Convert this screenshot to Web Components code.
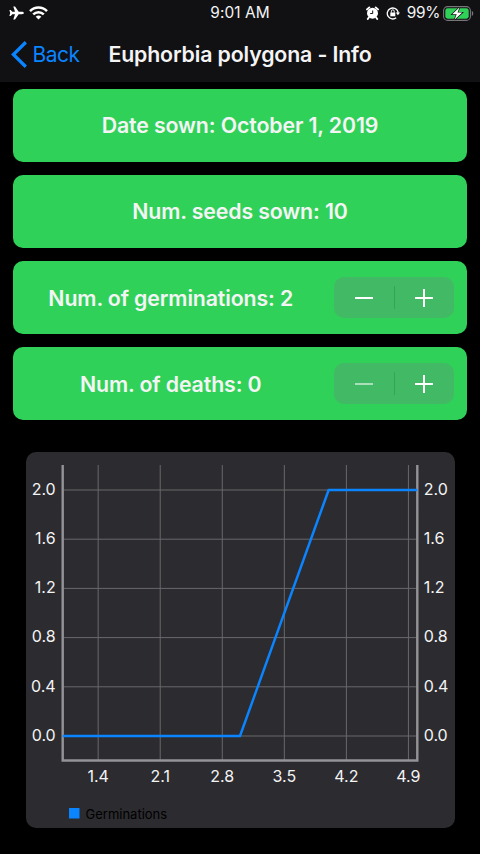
<!DOCTYPE html>
<html lang="en">
<head>
<meta charset="utf-8">
<title>Euphorbia polygona - Info</title>
<style>
html,body{margin:0;background:#000}
body{width:480px;height:854px;overflow:hidden;font-family:Inter,"Liberation Sans",sans-serif;color:#f4f4f5}
</style>
</head>
<body>
<seed-screen>
  <status-bar slot="top" time="9:01 AM" charge="99%"></status-bar>
  <nav-bar slot="top" back="Back">Euphorbia polygona - Info</nav-bar>
  <info-card>Date sown: October 1, 2019</info-card>
  <info-card>Num. seeds sown: 10</info-card>
  <info-card>Num. of germinations: 2<step-control slot="control"></step-control></info-card>
  <info-card>Num. of deaths: 0<step-control slot="control" at-min></step-control></info-card>
  <line-chart slot="chart" label="Germinations"></line-chart>
</seed-screen>
<script>
const define = (name, html, setup) => customElements.define(name, class extends HTMLElement {
  constructor() {
    super();
    const t = document.createElement('template');
    t.innerHTML = html;
    this.attachShadow({mode: 'open'}).append(t.content.cloneNode(true));
  }
  connectedCallback() { if (setup) setup(this, this.shadowRoot); }
});

define('seed-screen', `
<style>
:host{display:flex;flex-direction:column;height:854px;background:#000}
header{height:82px;background:#111113;flex:none}
main{display:grid;grid-template-rows:repeat(4,73.3px);row-gap:12.9px;padding:6.5px 13px 0}
footer{padding:32.1px 25.5px 0}
</style>
<header><slot name="top"></slot></header>
<main><slot></slot></main>
<footer><slot name="chart"></slot></footer>`);

define('status-bar', `
<style>
:host{display:grid;grid-template-columns:1fr auto 1fr;align-items:center;height:26px;font-size:15.4px;line-height:26px;letter-spacing:.1px}
.l,.r{display:flex;align-items:center}
.l{padding-left:9px;gap:5px}
.r{justify-content:flex-end;padding-right:6px}
svg{display:block;flex:none}
.r svg:nth-child(2){margin:0 7px 0 7px}
#charge{margin-right:3px;letter-spacing:-.3px}
</style>
<div class="l">
<svg width="15" height="14" viewBox="0 0 15 14" fill="#fff"><path d="M14.8 7c0 .8-.8 1.200-1.8 1.200H9.700l-3.700 5.200H4.300L6 8.200H3.300L1.700 10H.4L1.200 7 .4 4h1.300L3.300 5.800H6L4.300.6H6l3.700 5.200H13c1 0 1.800.4 1.800 1.200z"/></svg>
<svg width="19" height="14" viewBox="0 0 19 14" fill="none" stroke="#fff" stroke-width="2.5"><path d="M1 5.200C5.800.4 13.200.4 18 5.200"/><path d="M4.200 8.400c3-2.900 7.600-2.900 10.600 0"/><path d="M6.700 10.700c1.600-1.500 4-1.500 5.600 0L9.500 13.600z" fill="#fff" stroke="none"/></svg>
</div>
<span id="time"></span>
<div class="r">
<svg width="13" height="14" viewBox="0 0 13 14"><circle cx="6.500" cy="7.200" r="5.500" fill="#fff"/><path d="M1 3.400 3.300 1.400M12 3.400 9.700 1.400M2.800 11.500 1.800 13M10.200 11.500l1 1.500" stroke="#fff" stroke-width="1.900" stroke-linecap="round"/><path d="M6.700 4.500v3H4.200" fill="none" stroke="#111113" stroke-width="1"/></svg>
<svg width="14" height="14" viewBox="0 0 14 14" fill="none" stroke="#fff" stroke-width="1.300"><path d="M10.200 11.800A5.500 5.500 0 1 1 11.900 5.500V7"/><path d="m9.800 6.400 2.100 2.800L14 6.400z" fill="#fff" stroke="none"/><path d="M4.300 6.500h5v3.800h-5z" fill="#fff" stroke="none"/><path d="M5.400 6.700V5.200a1.400 1.400 0 0 1 2.800 0v1.500" stroke-width="1"/></svg>
<span id="charge"></span>
<svg width="31" height="15" viewBox="0 0 31 15"><rect x=".6" y=".6" width="26.800" height="13.800" rx="4" fill="none" stroke="#77777b" stroke-width="1.100"/><rect x="2.300" y="2.300" width="23.400" height="10.400" rx="2.400" fill="#30d158"/><path d="M28.800 5.100v4.800c1.900-.6 1.900-4.200 0-4.800z" fill="#77777b"/><path d="M16.600 1.200 9.200 8.300h4.500L11.500 13.800l7.700-7.200h-4.700z" fill="#fff" stroke="#111113" stroke-width="1.400" paint-order="stroke"/></svg>
</div>`, (el, r) => {
  r.getElementById('time').textContent = el.getAttribute('time');
  r.getElementById('charge').textContent = el.getAttribute('charge');
});

define('nav-bar', `
<style>
:host{display:grid;grid-template-columns:98px 1fr 98px;align-items:center;height:56px}
.back{display:flex;align-items:center;color:#0a84ff;font-size:21px;letter-spacing:-.5px;padding-left:11px;gap:5.500px}
svg{flex:none}
h1{margin:0;font-size:21.300px;font-weight:600;line-height:56px;text-align:center;white-space:nowrap;justify-self:center;letter-spacing:-.13px}
</style>
<div class="back"><svg width="16" height="27" viewBox="0 0 16 27" fill="none" stroke="#0a84ff" stroke-width="3.300"><path d="M14.800 1.300 2.400 13.500l12.400 12.200"/></svg><span id="b"></span></div>
<h1><slot></slot></h1>`, (el, r) => { r.getElementById('b').textContent = el.getAttribute('back'); });

define('info-card', `
<style>
:host{display:flex;align-items:center;box-sizing:border-box;padding:0 13px;background:#30d158;border-radius:10px;gap:18.500px}
.t{flex:1;text-align:center;font-size:21.300px;font-weight:600;letter-spacing:-.12px;white-space:nowrap;line-height:26px}
</style>
<span class="t"><slot></slot></span><slot name="control"></slot>`);

define('step-control', `
<style>
:host{display:grid;grid-template-columns:1fr 1px 1fr;align-items:center;justify-items:center;width:120px;height:40.500px;border-radius:10px;background:#42b964;flex:none}
i{width:1px;height:23px;background:#35a654}
svg{display:block}
:host([at-min]) .minus{opacity:.55}
</style>
<svg class="minus" width="18" height="18" viewBox="0 0 18 18"><path d="M0 9h18" stroke="#fff" stroke-width="2"/></svg><i></i>
<svg width="18" height="18" viewBox="0 0 18 18"><path d="M0 9h18M9 0v18" stroke="#fff" stroke-width="2"/></svg>`);

define('line-chart', `
<style>
:host{display:block;height:375.500px;border-radius:10px;background:#2c2b2f;overflow:hidden}
svg{display:block}
text{font-size:16px;fill:#f4f4f5}
</style>
<svg id="s" width="429" height="375.500" viewBox="26 452 429 375.500"></svg>`, (el, r) => {
  const X = v => 62.700 + (v - 1) * 88.650, Y = v => 736 - v * 123;
  let g = '';
  for (const v of [1.4, 2.1, 2.8, 3.5, 4.2, 4.9])
    g += `<path d="M${X(v)} 465V760" stroke="#69686b"/><text x="${X(v)}" y="782" text-anchor="middle">${v}</text>`;
  for (const v of [2, 1.6, 1.2, .8, .4, 0])
    g += `<path d="M63 ${Y(v)}H417" stroke="#69686b"/><text x="55.700" y="${Y(v) + 4.700}" text-anchor="end">${v.toFixed(1)}</text><text x="423.700" y="${Y(v) + 4.700}">${v.toFixed(1)}</text>`;
  g += `<path d="M62.700 465V760.500H417.300V465" fill="none" stroke="#949397" stroke-width="2.400"/>`;
  g += `<path d="M${X(1)} ${Y(0)}H${X(3)}L${X(4)} ${Y(2)}H${X(5)}" fill="none" stroke="#0a84ff" stroke-width="2.500"/>`;
  g += `<rect x="69" y="808" width="10.500" height="10.500" fill="#0a84ff"/><text x="85.500" y="818.500" style="font-size:13px;fill:#000">${el.getAttribute('label')}</text>`;
  r.getElementById('s').innerHTML = g;
});
</script>
</body>
</html>
